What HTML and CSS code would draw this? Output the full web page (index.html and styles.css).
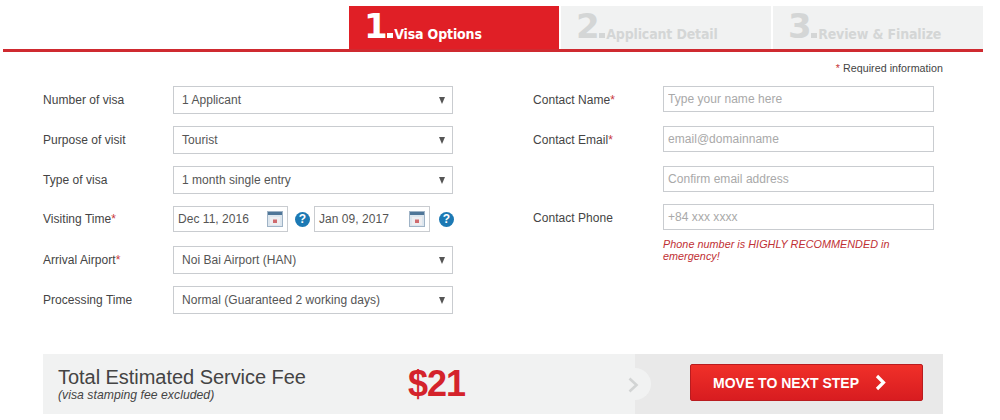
FILE: index.html
```html
<!DOCTYPE html>
<html lang="en">
<head>
<meta charset="utf-8">
<title>Visa Options</title>
<link rel="stylesheet" href="styles.css">
</head>
<body>
<div class="page">
  <nav class="steps">
    <div class="step active"><span class="num">1</span><span class="dot"></span><span class="name">Visa Options</span></div>
    <div class="step"><span class="num">2</span><span class="dot"></span><span class="name">Applicant Detail</span></div>
    <div class="step"><span class="num">3</span><span class="dot"></span><span class="name">Review &amp; Finalize</span></div>
  </nav>
  <p class="required"><span class="star">*</span> Required information</p>
  <div class="columns">
    <div class="col-left">
      <div class="row"><label class="label">Number of visa</label><div class="select">1 Applicant</div></div>
      <div class="row"><label class="label">Purpose of visit</label><div class="select">Tourist</div></div>
      <div class="row"><label class="label">Type of visa</label><div class="select">1 month single entry</div></div>
      <div class="row dates"><label class="label">Visiting Time<span class="star">*</span></label>
        <div class="date"><span>Dec 11, 2016</span>
          <svg class="cal" width="16" height="16" viewBox="0 0 16 16"><rect x=".5" y=".5" width="15" height="15" fill="#dde6ee" stroke="#9fb3c6"/><rect x="1" y="1" width="14" height="3" fill="#4f7698"/><rect x="3" y="6" width="10" height="8" fill="#eeeef1"/><rect x="6" y="8.5" width="4" height="3.5" fill="#cf6a6e"/></svg>
        </div>
        <span class="help">?</span>
        <div class="date second"><span>Jan 09, 2017</span>
          <svg class="cal" width="16" height="16" viewBox="0 0 16 16"><rect x=".5" y=".5" width="15" height="15" fill="#dde6ee" stroke="#9fb3c6"/><rect x="1" y="1" width="14" height="3" fill="#4f7698"/><rect x="3" y="6" width="10" height="8" fill="#eeeef1"/><rect x="6" y="8.5" width="4" height="3.5" fill="#cf6a6e"/></svg>
        </div>
        <span class="help last">?</span>
      </div>
      <div class="row"><label class="label">Arrival Airport<span class="star">*</span></label><div class="select">Noi Bai Airport (HAN)</div></div>
      <div class="row"><label class="label">Processing Time</label><div class="select">Normal (Guaranteed 2 working days)</div></div>
    </div>
    <div class="col-right">
      <div class="row"><label class="label wide">Contact Name<span class="star">*</span></label><input class="input" placeholder="Type your name here"></div>
      <div class="row"><label class="label wide">Contact Email<span class="star">*</span></label><input class="input" placeholder="email@domainname"></div>
      <div class="row"><span class="label wide"></span><input class="input" placeholder="Confirm email address"></div>
      <div class="row phone"><label class="label wide">Contact Phone</label><input class="input" placeholder="+84 xxx xxxx"></div>
      <p class="note">Phone number is HIGHLY RECOMMENDED in emergency!</p>
    </div>
  </div>
  <footer class="fee">
    <div class="fee-left">
      <div class="fee-text">
        <div class="fee-title">Total Estimated Service Fee</div>
        <div class="fee-sub">(visa stamping fee excluded)</div>
      </div>
      <div class="fee-price">$21</div>
      <svg class="notch" width="16" height="32" viewBox="0 0 16 32"><path d="M0 0A16 16 0 0 1 0 32Z" fill="#f1f2f2"/></svg>
      <svg class="chev-grey" width="11" height="16" viewBox="0 0 11 16"><path d="M1.5 1.5L8.5 8l-7 6.5" fill="none" stroke="#d2d4d4" stroke-width="2.6"/></svg>
    </div>
    <div class="fee-right">
      <button class="next">MOVE TO NEXT STEP<svg class="chev" width="13" height="17" viewBox="0 0 13 17"><path d="M2 2l6.5 6.5L2 15" fill="none" stroke="#fff" stroke-width="3.2"/></svg></button>
    </div>
  </footer>
</div>
</body>
</html>
```
FILE: styles.css
```css
* { box-sizing: border-box; }
html, body { margin: 0; padding: 0; background: #fff; }
body { font-family: "Liberation Sans", Arial, sans-serif; font-size: 12px; letter-spacing: .04px; color: #444; }
.page { width: 1000px; height: 420px; overflow: hidden; padding: 6px 17px 0 3px; }

.steps { display: flex; justify-content: flex-end; gap: 2px; height: 46px; border-bottom: 3px solid #cf2a30; }
.step { width: 210px; background: #f1f2f2; color: #d4d6d6; display: flex; align-items: flex-end; padding: 0 0 4px 15px; font-family: "DejaVu Sans Condensed", "DejaVu Sans", sans-serif; font-weight: 700; }
.step.active { background: #e01f26; color: #fff; }
.num { font-size: 34px; line-height: 38px; font-family: "DejaVu Sans", sans-serif; letter-spacing: -1.5px; }
.dot { width: 6px; height: 5px; background: currentColor; margin: 0 1px 7px 1px; }
.name { font-size: 14px; line-height: 20px; letter-spacing: -.15px; margin-bottom: 1px; }

.required { margin: 10px 40px 0 0; text-align: right; font-size: 10.7px; line-height: 13px; color: #444; }
.star { color: #c8383c; }

.columns { display: flex; padding-left: 40px; margin-top: 11px; height: 268px; }
.col-left { width: 490px; }
.col-right { width: 401px; }
.row { display: flex; align-items: center; height: 28px; margin-bottom: 12px; }
.label { flex: none; width: 130px; font-size: 12px; color: #444; }
.select { position: relative; width: 280px; height: 28px; border: 1px solid #c9ccd0; padding-left: 8px; line-height: 26px; color: #555; }
.select::after { content: ""; position: absolute; right: 7px; top: 10px; border-left: 3.5px solid transparent; border-right: 3.5px solid transparent; border-top: 7px solid #555; }
.row.dates { height: 26px; margin-bottom: 14px; }
.date { display: flex; align-items: center; justify-content: space-between; width: 115px; height: 26px; border: 1px solid #c9ccd0; padding: 0 4px; color: #555; }
.date.second { width: 116px; }
.cal { flex: none; }
.help { flex: none; width: 15px; height: 15px; margin: 0 4px 0 7px; border-radius: 50%; background: #1c79b4; color: #fff; font-weight: 700; font-size: 12px; line-height: 15px; text-align: center; }
.help.last { margin-left: 9px; }

.wide { width: 130px; padding-top: 2px; }
.input { width: 271px; height: 26px; border: 1px solid #c9ccd0; padding: 0 4px; font: 12px "Liberation Sans", Arial, sans-serif; letter-spacing: .04px; color: #444; outline: 0; background: #fff; }
.input::placeholder { color: #a9a9a9; opacity: 1; }
.col-right .row { height: 26px; margin-bottom: 14px; }
.col-right .row:nth-child(3) { margin-bottom: 12px; }
.col-right .row.phone { margin-bottom: 0; }
.note { margin: 8px 0 0 130px; width: 250px; font-size: 10.8px; line-height: 12px; font-style: italic; color: #bf3034; }

.fee { display: flex; width: 900px; height: 60px; margin-left: 40px; }
.fee-left { position: relative; display: flex; align-items: center; width: 592px; background: #f1f2f2; padding-left: 15px; }
.fee-text { width: 350px; color: #444; }
.fee-title { font-size: 20px; line-height: 22px; letter-spacing: -.04px; }
.fee-sub { font-size: 12.2px; line-height: 14px; font-style: italic; }
.fee-price { font-size: 36px; font-weight: 700; color: #d4232b; letter-spacing: -1px; }
.notch { position: absolute; left: 100%; top: 14px; z-index: 2; }
.chev-grey { position: absolute; left: calc(100% - 7px); top: 23px; z-index: 3; }
.fee-right { flex: 1; display: flex; background: #e9e9e9; padding: 10px 20px 0 55px; }
.next { display: flex; align-items: center; gap: 16px; width: 233px; height: 37px; padding: 0 0 0 22px; border: 1px solid #b91c1f; border-radius: 2px; background: linear-gradient(#f03029, #d81c20); color: #fff; font: 700 14px "Liberation Sans", Arial, sans-serif; letter-spacing: 0; }
.chev { flex: none; }
```
